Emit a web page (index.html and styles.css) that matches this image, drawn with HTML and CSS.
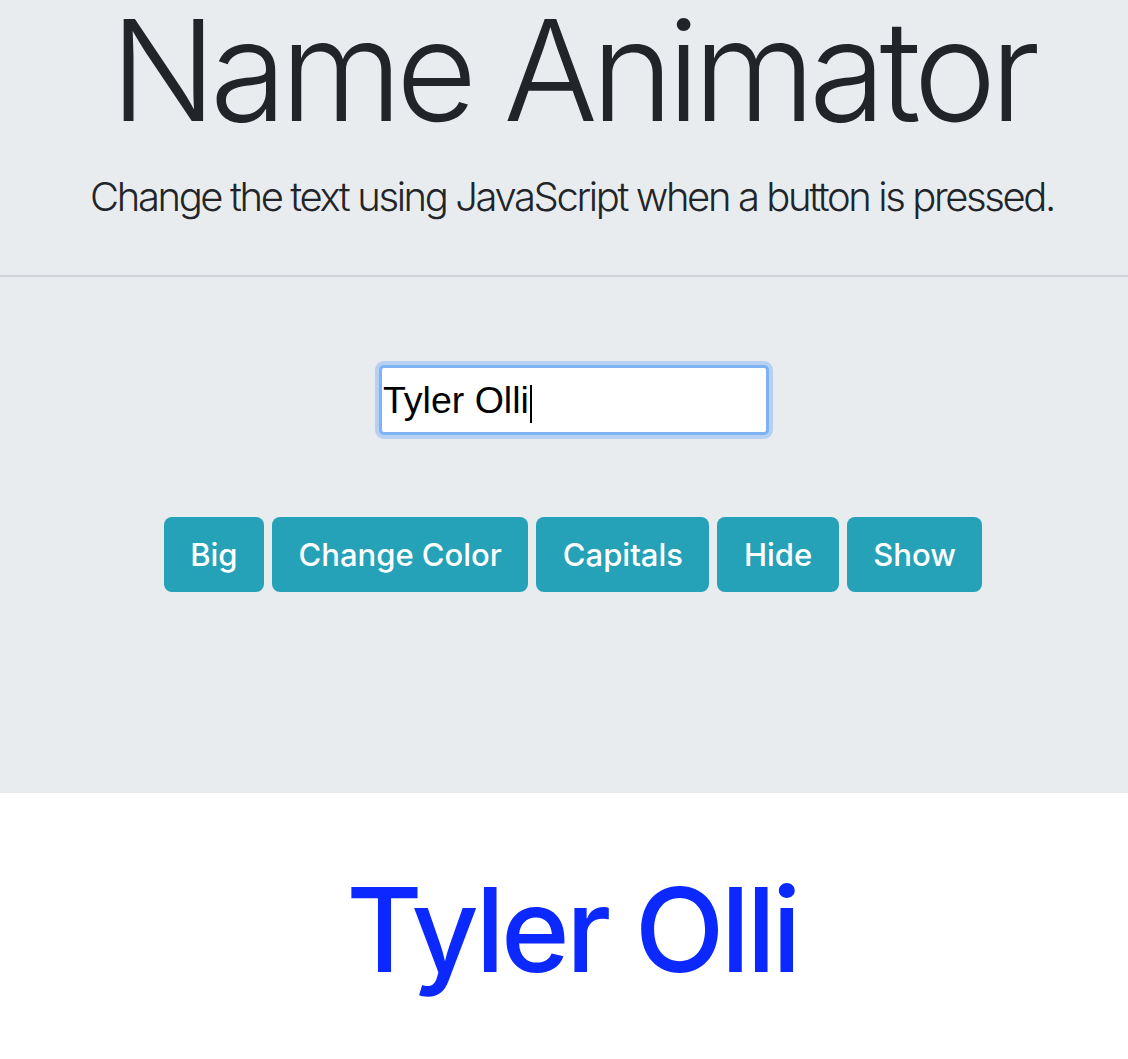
FILE: index.html
```html
<!DOCTYPE html>
<html>
<head>
<meta charset="utf-8">
<title>Name Animator</title>
<link rel="stylesheet" href="styles.css">
</head>
<body>
<div class="jumbotron">
  <div class="intro">
    <h1 class="title">Name Animator</h1>
    <p class="lead">Change the text using JavaScript when a button is pressed.</p>
  </div>
  <hr class="divider">
  <div class="controls">
    <div class="input-wrap">
      <input class="name-input" type="text" value="Tyler Olli"><span class="caret"></span>
    </div>
    <div class="buttons">
      <button class="btn">Big</button>
      <button class="btn">Change Color</button>
      <button class="btn">Capitals</button>
      <button class="btn">Hide</button>
      <button class="btn">Show</button>
    </div>
  </div>
</div>
<h1 class="name">Tyler Olli</h1>
</body>
</html>
```
FILE: styles.css
```css
html, body {
  margin: 0;
  padding: 0;
  background: #ffffff;
}
body {
  font-family: "Inter", "Noto Sans", sans-serif;
  color: #212529;
}
.jumbotron {
  background: #e9ecef;
  padding: 0 0 201px 0;
}
.intro {
  padding-left: 16px;
  text-align: center;
}
.title {
  margin: 0;
  padding-top: 4px;
  font-size: 140px;
  font-weight: 300;
  line-height: 132px;
  letter-spacing: -6.5px;
}
.lead {
  margin: 37px 0 0 0;
  font-size: 40px;
  font-weight: 300;
  line-height: 48px;
  letter-spacing: -2.4px;
}
.divider {
  margin: 54px 0 0 0;
  border: 0;
  border-top: 2px solid #d0d3d7;
  height: 0;
}
.controls {
  padding-left: 16px;
  display: flex;
  flex-direction: column;
  align-items: center;
}
.input-wrap {
  position: relative;
  margin-top: 88px;
  margin-left: 4px;
  display: flex;
}
.name-input {
  box-sizing: border-box;
  width: 390px;
  height: 70px;
  border: 3px solid #7fb2f2;
  border-radius: 5px;
  box-shadow: 0 0 0 4px rgba(140, 185, 245, 0.55);
  outline: none;
  background: #fff;
  padding: 0 0 0 1px;
  font-family: "Liberation Sans", Arial, sans-serif;
  font-size: 37.5px;
  color: #000;
}
.caret {
  position: absolute;
  left: 151px;
  top: 20px;
  width: 2px;
  height: 38px;
  background: #000;
}
.buttons {
  margin-top: 82px;
  display: flex;
  gap: 8px;
  margin-left: 2px;
}
.btn {
  height: 75px;
  padding: 0 26.5px;
  border: 0;
  border-radius: 8px;
  background: #26a2b8;
  color: #fff;
  font-family: "Inter", "Noto Sans", sans-serif;
  font-size: 31px;
  font-weight: 500;
  letter-spacing: 0;
}
.name {
  margin: 67px 0 0 0;
  padding-left: 16px;
  text-align: center;
  font-size: 117px;
  font-weight: 500;
  line-height: 140px;
  color: #0b28ff;
  letter-spacing: -3.8px;
}
```
